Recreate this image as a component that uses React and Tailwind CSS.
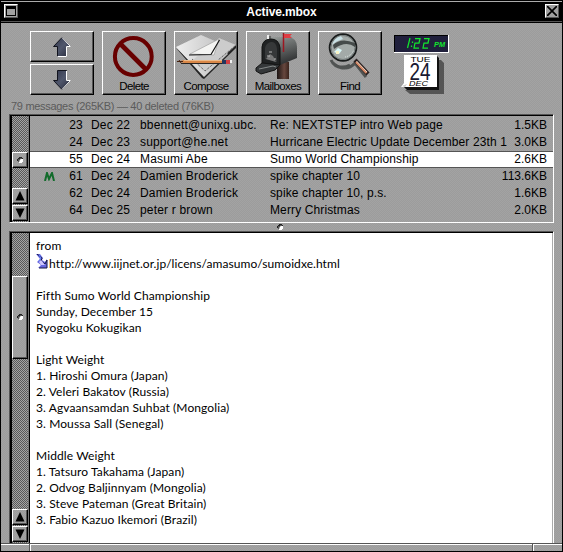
import React from 'react';

const dither = 'bg-[repeating-conic-gradient(#9c9c9c_0%_25%,#a3a3a3_0%_50%)] bg-[length:2px_2px]';
const track = 'bg-[repeating-conic-gradient(#585858_0%_25%,#a4a4a4_0%_50%)] bg-[length:2px_2px]';
const raised = 'border-l border-t border-r border-b border-l-white border-t-white border-r-black border-b-black shadow-[inset_-1px_-1px_0_#555]';

const messages = [
  { n: '23', date: 'Dec 22', from: 'bbennett@unixg.ubc.', subject: 'Re: NEXTSTEP intro Web page', size: '1.5KB' },
  { n: '24', date: 'Dec 23', from: 'support@he.net', subject: 'Hurricane Electric Update December 23th 1', size: '3.0KB' },
  { n: '55', date: 'Dec 24', from: 'Masumi Abe', subject: 'Sumo World Championship', size: '2.6KB', selected: true },
  { n: '61', date: 'Dec 24', from: 'Damien Broderick', subject: 'spike chapter 10', size: '113.6KB', mark: true },
  { n: '62', date: 'Dec 24', from: 'Damien Broderick', subject: 'spike chapter 10, p.s.', size: '1.6KB' },
  { n: '64', date: 'Dec 25', from: 'peter r brown', subject: 'Merry Christmas', size: '2.0KB' },
];

const body = [
  'Fifth Sumo World Championship',
  'Sunday, December 15',
  'Ryogoku Kokugikan',
  '',
  'Light Weight',
  '1. Hiroshi Omura (Japan)',
  '2. Veleri Bakatov (Russia)',
  '3. Agvaansamdan Suhbat (Mongolia)',
  '3. Moussa Sall (Senegal)',
  '',
  'Middle Weight',
  '1. Tatsuro Takahama (Japan)',
  '2. Odvog Baljinnyam (Mongolia)',
  '3. Steve Pateman (Great Britain)',
  '3. Fabio Kazuo Ikemori (Brazil)',
];

function Arrow({ down }) {
  const id = down ? 'arrow-down' : 'arrow-up';
  return (
    <svg width="20" height="22" viewBox="0 0 20 22">
      <defs>
        <linearGradient id={id} x1="0" x2="1" y1="0" y2="1">
          <stop offset="0" stopColor="#30354a" />
          <stop offset=".5" stopColor="#50576c" />
          <stop offset="1" stopColor="#242737" />
        </linearGradient>
      </defs>
      {down ? (
        <>
          <path d="M5.5 1.5H14.5V11.5H18.5L10 20.5 1.5 11.5H5.5Z" fill={`url(#${id})`} stroke="#11131d" />
          <path d="M14.5 2V11.5H18.5L10 20.5" fill="none" stroke="#fff" />
        </>
      ) : (
        <>
          <path d="M10 1.5 18.5 10.5H14.5V20.5H5.5V10.5H1.5Z" fill={`url(#${id})`} stroke="#11131d" />
          <path d="M10 1.5 18.5 10.5H14.5V20.5H5.5" fill="none" stroke="#fff" />
        </>
      )}
    </svg>
  );
}

function DeleteIcon() {
  return (
    <svg width="62" height="48" viewBox="0 0 62 48">
      <circle cx="30.3" cy="24.5" r="18.4" fill="none" stroke="#680000" strokeWidth="4" />
      <path d="M17 11.5 43.5 38" stroke="#680000" strokeWidth="4.6" />
    </svg>
  );
}

function ComposeIcon() {
  return (
    <svg width="62" height="48" viewBox="0 0 62 48">
      <defs>
        <linearGradient id="paper" x1="0" x2="1">
          <stop offset="0" stopColor="#eee" />
          <stop offset="1" stopColor="#bcbcbc" />
        </linearGradient>
      </defs>
      <path d="M1 16 27 46 29 47 61 16V13L30 42Z" fill="#252525" />
      <path d="M1 15 26 3 40 9 53 22 29 45Z" fill="url(#paper)" />
      <path d="M44 6 61 13 31 40 18 28Z" fill="#ccc" />
      <path d="M44 7 15 22 39 23Z" fill="#f4f4f2" stroke="#888" strokeWidth=".5" />
      <path d="M14 23 36 22.5 44.5 8" fill="none" stroke="#151515" strokeWidth="1.2" />
      <path d="M17 27 30 39 61 13" fill="none" stroke="#444" strokeWidth="1" strokeDasharray="1 1" />
      <path d="M6 31.5H53" stroke="#292522" strokeWidth="1" />
      <path d="M3 29.5 9 28H47V31H9Z" fill="#d98747" />
      <path d="M9 28.5H47" stroke="#f3c798" strokeWidth=".8" />
      <path d="M2 29.5H8M4 28 6 31" stroke="#47220f" />
      <path d="M47 28H51V32H47Z" fill="#22375e" />
      <path d="M51 28H55V32H51Z" fill="#cf3e43" />
      <path d="M55 28H57V31H55Z" fill="#eee" />
    </svg>
  );
}

function MailboxIcon() {
  return (
    <svg width="62" height="48" viewBox="0 0 62 48">
      <defs>
        <linearGradient id="tin" x1="0" x2=".4" y1="0" y2="1">
          <stop offset="0" stopColor="#a9adab" />
          <stop offset=".35" stopColor="#777b7a" />
          <stop offset="1" stopColor="#343637" />
        </linearGradient>
        <linearGradient id="post">
          <stop offset="0" stopColor="#1c1514" />
          <stop offset=".6" stopColor="#67473e" />
          <stop offset="1" stopColor="#39231c" />
        </linearGradient>
      </defs>
      <path d="M30 30H42V47H30Z" fill="url(#post)" />
      <path d="M15 32V14Q15 5 24 5H41Q50 6 50 15V26L33 33Z" fill="url(#tin)" />
      <path d="M15 31V15Q16 7 24 7T33 16V33Z" fill="#202223" stroke="#111" />
      <path d="M18 27V16Q19 11 24 10T30 17V30Z" fill="#363839" />
      <path d="M19 27 23 22 26 24 29 30Z" fill="#777" />
      <path d="M22 20H25M20 24H23M27 27H29" stroke="#b8b8b8" />
      <path d="M15 31 33 33 28 38 14 42 9 39V36Z" fill="#35383a" stroke="#151515" />
      <path d="M12 37 26 34 29 35" fill="none" stroke="#858989" />
      <path d="M21 3V7" stroke="#eee" strokeWidth="2" />
      <path d="M23 4V7" stroke="#333" />
      <path d="M36.5 20V1" stroke="#9d1720" strokeWidth="1.5" />
      <path d="M37 2H45L43 4 45 6H37Z" fill="#df3c43" />
    </svg>
  );
}

function FindIcon() {
  return (
    <svg width="62" height="48" viewBox="0 0 62 48">
      <path d="M12 28A14 13 0 0 0 36 31L47 45M14 31Q21 38 31 33" fill="none" stroke="#505352" strokeWidth="3" />
      <path d="M36 28 49 42" stroke="#2a2020" strokeWidth="4.2" />
      <path d="M37 30 47.5 41" stroke="#d78b69" strokeWidth="2.2" />
      <path d="M37.5 29 48 40" stroke="#fff0df" strokeWidth=".8" />
      <circle cx="24" cy="15.5" r="13.4" fill="#a3aaa8" stroke="#181b1b" strokeWidth="1.8" />
      <circle cx="24" cy="15.5" r="12" fill="none" stroke="#737a7a" />
      <path d="M14 13Q22 5 36 11V15Q27 8 15 17Z" fill="#454b4a" />
      <path d="M13 13Q15 6 22 4L24 7Q17 9 13 13Z" fill="#c9e1e6" />
      <path d="M15 20 19 16 23 18 20 22Z" fill="#d9f8f8" />
      <path d="M17 19H20V22H17Z" fill="#f8f4c6" />
      <path d="M26 25Q32 24 35 18" fill="none" stroke="#dfe8e6" strokeDasharray="1 1" />
    </svg>
  );
}

function ToolButton({ label, children }) {
  return (
    <div className={`flex h-16 w-16 flex-col items-center overflow-hidden ${raised}`}>
      <div className="h-12 w-[62px] shrink-0">{children}</div>
      <div className="-mt-px whitespace-nowrap text-[11.5px] leading-[14px] tracking-[-0.6px]">{label}</div>
    </div>
  );
}

function Calendar() {
  return (
    <svg width="46" height="42" viewBox="0 0 46 42" className="mt-[2px]">
      <path d="M37 5H40L43 8V39H9L4 35H37Z" fill="#555" />
      <path d="M36 1 38 3V35H6L2 31H36Z" fill="#111" />
      <path d="M3 0H36V32H0L3 28Z" fill="#fff" />
      <path d="M1 31 6 29 4 32Z" fill="#ccc" />
      <text x="19.5" y="6.5" textAnchor="middle" textLength="20" lengthAdjust="spacingAndGlyphs" fontSize="8" fontFamily="Liberation Sans">TUE</text>
      <text x="19" y="25" textAnchor="middle" textLength="21" lengthAdjust="spacingAndGlyphs" fontSize="24" fontFamily="Liberation Sans" fill="#181830">24</text>
      <text x="17.5" y="31" textAnchor="middle" textLength="19" lengthAdjust="spacingAndGlyphs" fontSize="7.5" fontStyle="italic" fontFamily="Liberation Sans">DEC</text>
    </svg>
  );
}

function Dimple() {
  return (
    <svg width="7" height="7" viewBox="0 0 7 7" shapeRendering="crispEdges">
      <path d="M1 1H2V0H5V1H6V2H3V3H2V5H1V4H0V2H1Z" fill="#222" />
      <path d="M3 1H5V2H3V3H2V5H1V2H3Z" fill="#555" />
      <path d="M3 2H6V5H5V6H2V5H3Z" fill="#fff" />
      <path d="M3 2H4V3H3ZM2 4H3V5H2Z" fill="#ccc" />
    </svg>
  );
}

function ScrollArrow({ down }) {
  return (
    <div className={`flex h-4 w-4 items-center justify-center ${raised} ${dither}`}>
      <svg width="10" height="10" viewBox="0 0 10 10" className={down ? 'rotate-180' : ''}>
        <path d="M5 0 9.5 9.5H.5Z" />
      </svg>
    </div>
  );
}

function LinkIcon() {
  return (
    <svg width="12" height="15" viewBox="0 0 12 15" className="shrink-0">
      <path d="M0 0H4L7 4 6 6 9 8 11 5V14H2L5 11 1 8 4 5Z" fill="#6767df" />
      <path d="M1 0 6 4 5 7 9 10 11 6V14H3" fill="none" stroke="#171743" />
      <path d="M5 6 9 11H5L3 8Z" fill="#d0c7ff" />
      <path d="M3 1 5 4 3 7" fill="none" stroke="#6386ff" />
    </svg>
  );
}

export default function App() {
  return (
    <div className={`flex h-[552px] w-[563px] flex-col overflow-hidden border border-black font-['Liberation_Sans',sans-serif] text-[12px] text-black ${dither}`}>
      <header className="flex h-[22px] shrink-0 items-start justify-between border-b border-t border-b-black border-t-[#aaa] bg-black px-[3px] pt-[2px] shadow-[inset_0_-1px_0_#555]">
        <div className="flex h-[14px] w-[14px] items-center justify-center border border-b-[#555] border-l-white border-r-[#555] border-t-white bg-[#a0a0a0]">
          <div className="h-[10px] w-[10px] border border-t-[3px] border-black bg-[#a0a0a0]" />
        </div>
        <div className="mt-px text-[12px] font-bold leading-[14px] tracking-[-0.1px] text-white">Active.mbox</div>
        <div className="flex h-[14px] w-[14px] items-center justify-center border border-b-[#555] border-l-white border-r-[#555] border-t-white bg-[#a0a0a0]">
          <svg width="10" height="10" viewBox="0 0 10 10"><path d="M0 0 10 10M10 0 0 10" stroke="#000" strokeWidth="1.7" /></svg>
        </div>
      </header>

      <div className="flex h-[72px] shrink-0 gap-2 pl-[29px] pt-2">
        <div className="flex w-16 flex-col gap-[2px]">
          <div className={`flex h-[31px] items-center justify-center ${raised}`}><Arrow /></div>
          <div className={`flex h-[31px] items-center justify-center ${raised}`}><Arrow down /></div>
        </div>
        <ToolButton label="Delete"><DeleteIcon /></ToolButton>
        <ToolButton label="Compose"><ComposeIcon /></ToolButton>
        <ToolButton label="Mailboxes"><MailboxIcon /></ToolButton>
        <ToolButton label="Find"><FindIcon /></ToolButton>
        <div className="flex flex-col pl-1 pt-1">
          <svg width="55" height="18" viewBox="0 0 55 18" className="shrink-0">
            <path d="M0 0H55V18H0Z" fill="#fff" />
            <path d="M0 0H54V17H0Z" fill="#000" />
            <path d="M1 1H54V17H1Z" fill="#20203c" />
            <g fill="none" stroke="#12e52d" strokeWidth="1.25">
              <path d="M16 3 13.5 13M18.5 6.5V8M17.5 10.5V12M21 3.5H26L25 8H21L20 13H25M30 3.5H35L34 8H30L29 13H34" />
            </g>
            <text x="40" y="12" fontSize="8" fontStyle="italic" fontWeight="bold" textLength="11" lengthAdjust="spacingAndGlyphs" fontFamily="Liberation Sans" fill="#12e52d">PM</text>
          </svg>
          <div className="pl-[7px]"><Calendar /></div>
        </div>
      </div>

      <div className="h-[19px] shrink-0 whitespace-nowrap pl-[10px] pt-[5px] text-[11px] leading-[13px] tracking-[-0.3px] text-[#5b5b5b]">79 messages (265KB) — 40 deleted (76KB)</div>

      <section className="mx-2 flex h-[109px] shrink-0 border border-b-white border-l-[#555] border-r-white border-t-[#555]">
        <div className="flex w-full border-l border-t border-black">
          <div className={`flex w-[17px] shrink-0 flex-col justify-between border-l border-black ${track}`}>
            <div className="flex h-[52px] items-end">
              <div className={`flex h-4 w-4 items-center justify-center ${raised} ${dither}`}><Dimple /></div>
            </div>
            <div className="flex flex-col gap-px pb-px"><ScrollArrow /><ScrollArrow down /></div>
          </div>
          <div className="w-[2px] shrink-0 border-l border-l-[#777] bg-black" />
          <div className="flex min-w-0 flex-1 flex-col pt-px">
            {messages.map((m) => (
              <div key={m.n} className={`flex h-[17px] shrink-0 items-center whitespace-nowrap border-y leading-[15px] ${m.selected ? 'border-[#555] bg-white' : 'border-transparent'}`}>
                <div className="flex w-[31px] justify-center pl-2">
                  {m.mark && <svg width="11" height="9" viewBox="0 0 11 9"><path d="M1 9 3 1 5 7 8 1 10 9" fill="none" stroke="#126b2b" strokeWidth="2" /></svg>}
                </div>
                <div className="w-[22px] text-right tracking-[0.2px]">{m.n}</div>
                <div className="w-[49px] pl-[8px] tracking-[0.2px]">{m.date}</div>
                <div className="w-[130px] pl-[8px] tracking-[0.17px]">{m.from}</div>
                <div className="flex-1 pl-[8px] tracking-[0.12px]">{m.subject}</div>
                <div className="pr-[6px] text-right">{m.size}</div>
              </div>
            ))}
          </div>
        </div>
      </section>

      <div className="flex h-2 shrink-0 items-center justify-center pr-[3px]"><Dimple /></div>

      <section className="mx-2 flex h-[312px] shrink-0 border border-b-0 border-l-[#555] border-r-white border-t-[#555]">
        <div className="flex w-full border-l border-t border-black">
          <div className={`flex w-[17px] shrink-0 flex-col justify-between border-l border-black pb-px pt-[43px] ${track}`}>
            <div className={`flex h-[83px] w-4 items-center justify-center ${raised} ${dither}`}><Dimple /></div>
            <div className="flex flex-col gap-px"><ScrollArrow /><ScrollArrow down /></div>
          </div>
          <div className="w-[2px] shrink-0 border-l border-l-[#777] bg-black" />
          <div className="flex-1 border-r border-[#aaa] bg-white pl-[6px] pt-[5px] font-['Lato',sans-serif] text-[12px] leading-4 tracking-[0.1px]">
            <div>from</div>
            <div className="flex h-[18px]"><LinkIcon /><span className="pl-px pt-[2px] tracking-[0.06px]">http://www.iijnet.or.jp/licens/amasumo/sumoidxe.html</span></div>
            <div className="h-4" />
            {body.map((line, i) => <div key={i} className="h-4 whitespace-nowrap">{line}</div>)}
          </div>
        </div>
      </section>

      <footer className="flex h-2 shrink-0 border-t border-[#555]">
        <div className="w-7 border-t border-white" />
        <div className="w-px bg-[#555]" />
        <div className="flex-1 border-l border-t border-white" />
        <div className="w-px bg-[#555]" />
        <div className="w-[29px] border-l border-t border-white" />
      </footer>
    </div>
  );
}
